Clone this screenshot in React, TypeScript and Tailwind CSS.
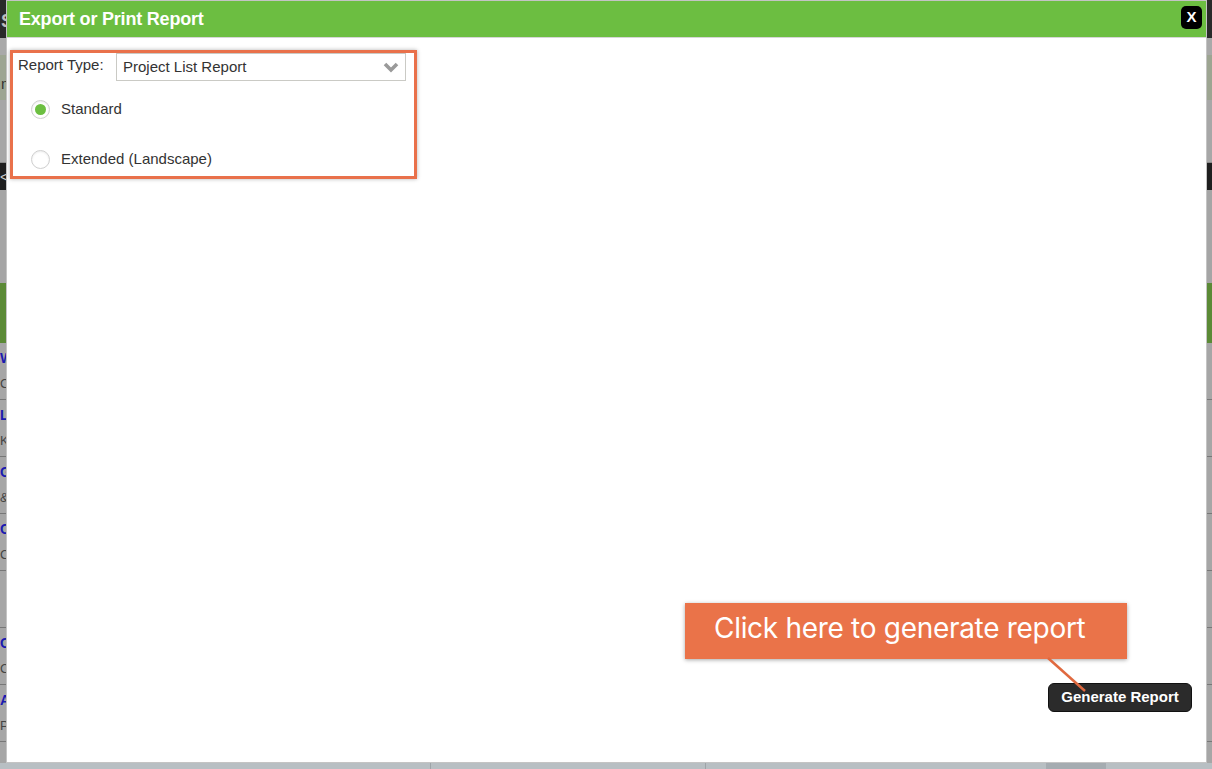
import React, { useState } from 'react';

const pageRows = [
  { link: 'WA', sub: 'Co' },
  { link: 'LI', sub: 'K' },
  { link: 'G', sub: '&' },
  { link: 'CO', sub: 'C' },
  { link: '', sub: '' },
  { link: 'O', sub: 'C' },
  { link: 'A', sub: 'P' },
];

// dimmed page that sits behind the modal; only its edges show
const BackgroundPage = () => (
  <div className="w-[1212px] h-[769px] bg-[#a6a6a6] flex flex-col overflow-hidden font-['Liberation_Sans',Arial,sans-serif]">
    <div className="h-[38px] bg-[#2a2a2a] text-[#bdbdbd] text-[18px] font-bold pl-[1px] pt-[8px]">S</div>
    <div className="h-[17px] bg-[#a9a9a9]" />
    <div className="h-[45px] bg-[#9da592] text-[#333] text-[15px] pl-[1px] pt-[18px]">m</div>
    <div className="h-[63px] bg-[#a7a7a7] border-b border-[#8a8a8a]" />
    <div className="h-[27px] bg-[#1f1f1f] text-[#ccc] text-[14px] pt-[4px]">&lt;</div>
    <div className="h-[93px] bg-[#a5a5a5]" />
    <div className="h-[60px] bg-[#5b8a36]" />
    <div className="flex-1 flex flex-col">
      {pageRows.map((r, i) => (
        <div key={i} className="h-[57px] border-b border-[#777] flex flex-col justify-center">
          <span className="text-[#1a1ab0] font-bold text-[14px] leading-[18px]">{r.link}</span>
          <span className="text-[#444] text-[13px] leading-[18px] mt-[8px]">{r.sub}</span>
        </div>
      ))}
    </div>
    <div className="h-[6px] bg-[#b8bfc3] flex">
      <div className="w-[430px]" />
      <div className="w-[1px] bg-[#9ea4a8]" />
      <div className="w-[274px]" />
      <div className="w-[1px] bg-[#9ea4a8]" />
      <div className="w-[340px]" />
      <div className="w-[60px] bg-[#a5acb1]" />
    </div>
  </div>
);

const Radio = ({ checked, label, onClick }: { checked: boolean; label: string; onClick: () => void }) => (
  <button type="button" onClick={onClick} className="flex items-center gap-[11px] h-[18px] text-left">
    <span className="w-[19px] h-[19px] rounded-full border border-[#cfcfcf] bg-white shadow-[inset_0_1px_2px_rgba(0,0,0,0.08)] flex items-center justify-center">
      {checked && <span className="w-[11px] h-[11px] rounded-full bg-[#6cbf41]" />}
    </span>
    <span className="text-[15px] text-[#333]">{label}</span>
  </button>
);

export default function App() {
  const [layout, setLayout] = useState<'standard' | 'extended'>('standard');

  return (
    <div className="relative w-[1212px] h-[769px] overflow-hidden font-['Liberation_Sans',Arial,sans-serif]">
      <BackgroundPage />

      {/* modal */}
      <div className="absolute left-[6px] top-0 w-[1201px] h-[763px] bg-white border border-[#c4c4c4] flex flex-col">
        <div className="h-[37px] bg-[#6cbe41] border-b border-[#d6d6d6] flex items-center justify-between pl-[12px] pr-[4px]">
          <h1 className="text-white text-[18px] font-bold tracking-[-0.2px]">Export or Print Report</h1>
          <button type="button" className="w-[21px] h-[23px] bg-black rounded-[5px] text-white text-[15px] font-bold flex items-center justify-center mt-[-4px]">
            X
          </button>
        </div>

        <div className="flex-1 flex flex-col relative">
          {/* highlighted form area */}
          <div className="ml-[3px] mt-[12px] w-[407px] h-[129px] border-[3px] border-[#e9714b] shadow-[0_0_4px_rgba(0,0,0,0.3)] flex flex-col">
            <div className="flex items-start pl-[5px] pr-[8px]">
              <span className="w-[98px] text-[15px] leading-[16px] mt-[4px] text-[#333]">Report Type:</span>
              <div className="flex-1 h-[28px] border border-[#cacac5] flex items-center justify-between pl-[6px] pr-[6px]">
                <span className="text-[15px] text-[#333]">Project List Report</span>
                <svg width="16" height="11" viewBox="0 0 16 11">
                  <polyline points="2,2 8,8 14,2" fill="none" stroke="#9a9a9a" strokeWidth="3.6" />
                </svg>
              </div>
            </div>
            <div className="ml-[18px] mt-[19px] flex flex-col gap-[32px]">
              <Radio checked={layout === 'standard'} label="Standard" onClick={() => setLayout('standard')} />
              <Radio checked={layout === 'extended'} label="Extended (Landscape)" onClick={() => setLayout('extended')} />
            </div>
          </div>

          <div className="flex-1" />

          <div className="flex justify-end pr-[14px] pb-[50px]">
            <button type="button" className="w-[144px] h-[29px] bg-[#2b2b2b] rounded-[6px] border border-[#111] text-white text-[15px] font-bold">
              Generate Report
            </button>
          </div>

          {/* annotation callout */}
          <div className="absolute left-[678px] top-[565px] w-[442px] h-[56px] bg-[#ea7349] shadow-[0_1px_4px_rgba(0,0,0,0.35)] flex items-center pl-[29px] pb-[6px]">
            <span className="text-white text-[28px] font-['Inter',sans-serif] tracking-[-0.3px]">Click here to generate report</span>
          </div>
          <svg className="absolute left-[1038px] top-[618px]" width="44" height="40" viewBox="0 0 44 40">
            <line x1="3" y1="2" x2="40" y2="35" stroke="#e0693f" strokeWidth="2.5" />
          </svg>
        </div>
      </div>
    </div>
  );
}
